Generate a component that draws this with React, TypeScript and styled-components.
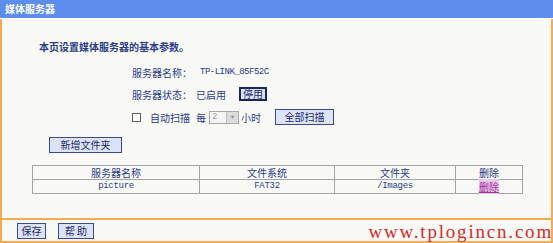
import * as React from 'react'
import styled, { createGlobalStyle } from 'styled-components'

const GlobalStyle = createGlobalStyle`
  html, body {
    margin: 0;
    padding: 0;
    background: #f8f8f4;
  }
  body {
    font-family: "Noto Sans CJK SC", "Noto Sans", sans-serif;
  }
`

const cjk = `"Noto Sans CJK SC", "Noto Sans", sans-serif`
const mono = `"Liberation Mono", "DejaVu Sans Mono", monospace`
const navy = '#2a3d8c'
const orange = '#f2ac55'

const Page = styled.div`
  position: relative;
  width: 553px;
  height: 243px;
  overflow: hidden;
  display: flex;
  flex-direction: column;
  background: #f8f8f4;
  font-family: ${cjk};
  color: ${navy};
  font-size: 10px;
`

const TitleBar = styled.div`
  height: 18px;
  line-height: 18px;
  padding-left: 5px;
  background: #5d8eee;
  border-bottom: 1px solid #ffffff;
  color: #ffffff;
  font-size: 10px;
  font-weight: bold;
`

const Panel = styled.div`
  height: 199px;
  box-sizing: border-box;
  border-left: 2px solid ${orange};
  border-right: 2px solid ${orange};
  display: flex;
  flex-direction: column;
`

const Intro = styled.div`
  margin: 21px 0 0 37px;
  line-height: 14px;
  font-weight: bold;
`

const Form = styled.div`
  margin: 7px 0 0 130px;
  display: flex;
  flex-direction: column;
`

const Row = styled.div<{ $h: number }>`
  height: ${(p) => p.$h}px;
  display: flex;
  align-items: center;
`

const Label = styled.span`
  width: 64px;
`

const Value = styled.span<{ $mono?: boolean }>`
  font-family: ${(p) => (p.$mono ? mono : cjk)};
  font-size: ${(p) => (p.$mono ? '9px' : '10px')};
  letter-spacing: ${(p) => (p.$mono ? '-0.5px' : '0')};
  margin-left: ${(p) => (p.$mono ? '4px' : '0')};
`

const Button = styled.button<{ $w: number; $focus?: boolean }>`
  width: ${(p) => p.$w}px;
  height: ${(p) => (p.$focus ? 14 : 16)}px;
  padding: 0;
  box-sizing: border-box;
  background: #dde3f6;
  border: ${(p) => (p.$focus ? '2px solid #1b2660' : '1px solid #3a4a8c')};
  color: #1b2a6a;
  font-family: ${cjk};
  font-size: 10px;
  line-height: 1;
  cursor: pointer;
`

const Check = styled.input`
  appearance: none;
  margin: 0 9px 0 0;
  width: 9px;
  height: 9px;
  box-sizing: border-box;
  border: 1px solid #606060;
  background: #ffffff;
`

const Every = styled.span`
  margin: 0 3px 0 6px;
`

const Select = styled.div`
  width: 30px;
  height: 13px;
  box-sizing: border-box;
  border: 1px solid #a8a8a8;
  background: #f4f4f4;
  display: flex;
  align-items: center;
  justify-content: space-between;
  color: #a0a0a0;
  font-family: ${mono};
  font-size: 9px;
  padding-left: 2px;
`

const Arrow = styled.span`
  width: 11px;
  height: 11px;
  background: #dcdcdc;
  border-left: 1px solid #c0c0c0;
  display: flex;
  align-items: center;
  justify-content: center;
  color: #909090;
  font-size: 6px;
`

const Hours = styled.span`
  margin: 0 14px 0 2px;
`

const AddRow = styled.div`
  margin: 8px 0 0 47px;
`

const Table = styled.table`
  margin: 12px 0 0 30px;
  width: 491px;
  border-collapse: collapse;
  table-layout: fixed;
`

const Cell = styled.td<{ $w?: number; $mono?: boolean }>`
  width: ${(p) => (p.$w ? `${p.$w}px` : 'auto')};
  height: 13px;
  padding: 0;
  border: 1px solid #a4a4a4;
  text-align: center;
  line-height: 13px;
  font-family: ${(p) => (p.$mono ? mono : cjk)};
  font-size: ${(p) => (p.$mono ? '9px' : '10px')};
  letter-spacing: ${(p) => (p.$mono ? '-0.3px' : '0')};
  color: ${navy};
`

const DeleteLink = styled.a`
  color: #a0309a;
  background: #e8c8ec;
  text-decoration: underline;
  cursor: pointer;
`

const Footer = styled.div`
  flex: 1;
  border: 2px solid ${orange};
  display: flex;
  align-items: center;
  gap: 12px;
  padding-left: 15px;
`

const Watermark = styled.div`
  position: absolute;
  right: 0;
  bottom: 1px;
  color: #d42a2a;
  font-family: "Liberation Serif", serif;
  font-size: 19px;
  letter-spacing: 1.8px;
  line-height: 20px;
`

export default function App() {
  return (
    <>
      <GlobalStyle />
      <Page>
        <TitleBar>媒体服务器</TitleBar>
        <Panel>
          <Intro>本页设置媒体服务器的基本参数。</Intro>
          <Form>
            <Row $h={22}>
              <Label>服务器名称：</Label>
              <Value $mono>TP-LINK_85F52C</Value>
            </Row>
            <Row $h={22}>
              <Label>服务器状态：</Label>
              <Value>已启用</Value>
              <span style={{ width: 13 }} />
              <Button $w={28} $focus>停用</Button>
            </Row>
            <Row $h={24}>
              <Check type="checkbox" />
              <span>自动扫描</span>
              <Every>每</Every>
              <Select>
                2<Arrow>▼</Arrow>
              </Select>
              <Hours>小时</Hours>
              <Button $w={59}>全部扫描</Button>
            </Row>
          </Form>
          <AddRow>
            <Button $w={73}>新增文件夹</Button>
          </AddRow>
          <Table>
            <tbody>
              <tr>
                <Cell $w={166}>服务器名称</Cell>
                <Cell $w={134}>文件系统</Cell>
                <Cell $w={120}>文件夹</Cell>
                <Cell>删除</Cell>
              </tr>
              <tr>
                <Cell $mono>picture</Cell>
                <Cell $mono>FAT32</Cell>
                <Cell $mono>/Images</Cell>
                <Cell>
                  <DeleteLink>删除</DeleteLink>
                </Cell>
              </tr>
            </tbody>
          </Table>
        </Panel>
        <Footer>
          <Button $w={29}>保存</Button>
          <Button $w={36}>帮 助</Button>
        </Footer>
        <Watermark>www.tplogincn.com</Watermark>
      </Page>
    </>
  )
}
